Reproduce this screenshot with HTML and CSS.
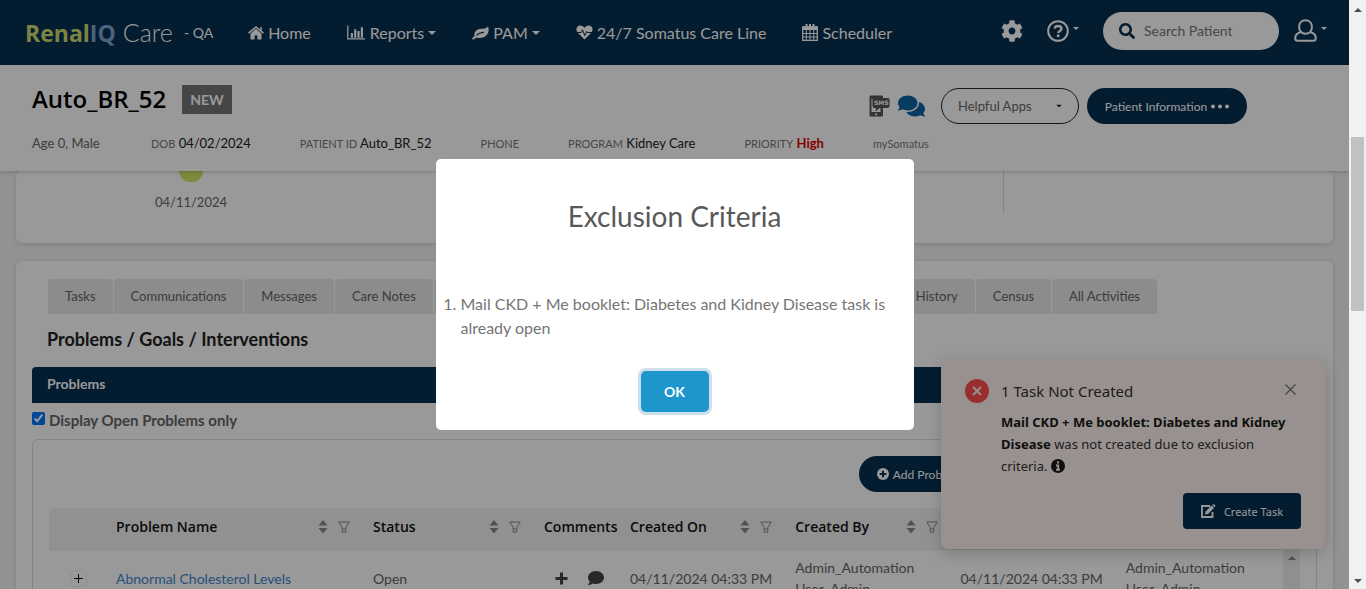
FILE: index.html
```html
<!DOCTYPE html>
<html lang="en">
<head>
<meta charset="utf-8">
<title>RenalIQ Care</title>
<link rel="stylesheet" href="styles.css">
</head>
<body>
<svg class="sprite" aria-hidden="true">
  <symbol id="sorter" viewBox="0 0 10 14"><path d="M5 0l4.500 5.500h-9zM5 13.500L.5 8h9z" fill="currentColor"/></symbol>
  <symbol id="funnel" viewBox="0 0 12 12"><path d="M.8 1h10.400L7.800 6.500v4.700H4.200V6.500zM4.200 8h3.600" fill="none" stroke="currentColor"/></symbol>
  <symbol id="caret" viewBox="0 0 8 4"><path d="M0 0h8L4 4z" fill="currentColor"/></symbol>
</svg>
<div class="app">
  <header class="navbar">
    <div class="brand"><span class="brand-renal">Renal</span><span class="brand-iq">IQ</span><span class="brand-care">Care</span></div>
    <span class="env">- QA</span>
    <nav class="menu">
      <a href="#"><svg width="16" height="14" viewBox="0 0 16 14"><path d="M8 2.800L2.500 7.400V13c0 .4.200.6.600.6h3.500V9.500h2.800v4.100h3.500c.4 0 .6-.2.600-.6V7.400z" fill="currentColor"/><path d="M.5 7.200L8 1l7.500 6.200M13 1v4" fill="none" stroke="currentColor" stroke-width="1.500"/></svg>Home</a>
      <a href="#"><svg width="19" height="15" viewBox="0 0 20 15"><path d="M.8 0v14.200H19" fill="none" stroke="currentColor" stroke-width="1.300"/><path d="M4 8h2.300v5H4zM7.500 4h2.300v9H7.500zM11 6h2.300v7H11zM14.500 2h2.300v11h-2.300z" fill="currentColor"/></svg>Reports<svg class="caret" width="8" height="4"><use href="#caret"/></svg></a>
      <a href="#"><svg width="17" height="14" viewBox="0 0 17 14"><path d="M16 .3c1 2.700 1 6.500-1.500 9-2.500 2.700-6.500 3.200-9.700 2.100C3.300 11.600 2.800 13.600 1 13.500c-1.200-.2-1-1.300-.2-2 .8-.8 1.700-1 1.700-2C2 6 4.300 3.300 8 2.900c3-.3 6.300.2 8-2.600z" fill="currentColor"/><path d="M4.500 9.500C6 7.800 8.500 6.500 12 6.300" fill="none" stroke="#072f50" stroke-width="1.100"/></svg>PAM<svg class="caret" width="8" height="4"><use href="#caret"/></svg></a>
      <a href="#"><svg width="17" height="15" viewBox="0 0 17 15"><path d="M8.500 14.500L2 8C-.6 5.300 0 .5 4.300.5c2 0 3.200 1.200 4.200 2.400 1-1.200 2.200-2.400 4.200-2.400C17 .5 17.600 5.300 15 8z" fill="currentColor"/><path d="M1 7.500h4.300l1.200-2.700 2.300 5.800 1.900-4.300.7 1.200H16" fill="none" stroke="#072f50"/></svg>24/7 Somatus Care Line</a>
      <a href="#"><svg width="16" height="17" viewBox="0 0 16 17"><path d="M.7 3h14.600v13.300H.7z" fill="none" stroke="currentColor" stroke-width="1.300"/><path d="M.7 2.500h14.600V6H.7z" fill="currentColor"/><path d="M4.300 6v10M8 6v10M11.700 6v10M1 9.500h14M1 13h14" stroke="currentColor"/><path d="M4.500 0v4.500M11.500 0v4.500M8 0v3" stroke="currentColor" stroke-width="2"/></svg>Scheduler</a>
    </nav>
    <div class="tools">
      <button class="plain" aria-label="Settings"><svg width="22" height="22" viewBox="0 0 512 512"><path fill="currentColor" d="M487.400 315.700l-42.600-24.600c4.300-23.200 4.300-47 0-70.200l42.600-24.600c4.900-2.800 7.100-8.600 5.500-14-11.100-35.600-30-67.800-54.700-94.600-3.800-4.100-10-5.100-14.800-2.300L380.800 110c-17.900-15.400-38.500-27.300-60.800-35.100V25.800c0-5.600-3.900-10.500-9.400-11.700-36.700-8.200-74.300-7.800-109.200 0-5.500 1.200-9.400 6.100-9.400 11.700V75c-22.200 7.900-42.800 19.800-60.800 35.100L88.700 85.500c-4.900-2.800-11-1.900-14.800 2.300-24.700 26.700-43.600 58.900-54.700 94.600-1.700 5.400.6 11.200 5.500 14L67.300 221c-4.300 23.200-4.300 47 0 70.200l-42.600 24.600c-4.900 2.800-7.100 8.600-5.500 14 11.100 35.600 30 67.800 54.700 94.600 3.800 4.100 10 5.100 14.800 2.300l42.600-24.600c17.900 15.400 38.500 27.300 60.800 35.100v49.200c0 5.600 3.900 10.500 9.400 11.700 36.700 8.200 74.300 7.800 109.200 0 5.500-1.200 9.400-6.100 9.400-11.700v-49.200c22.200-7.900 42.800-19.800 60.800-35.100l42.600 24.600c4.900 2.800 11 1.900 14.800-2.300 24.700-26.700 43.600-58.900 54.700-94.600 1.500-5.500-.7-11.300-5.600-14.100zM256 336c-44.100 0-80-35.900-80-80s35.900-80 80-80 80 35.900 80 80-35.900 80-80 80z"/></svg></button>
      <button class="plain" aria-label="Help"><svg width="22" height="22" viewBox="0 0 22 22" fill="none" stroke="currentColor"><circle cx="11" cy="11" r="9.800" stroke-width="2"/><path d="M7.500 8.500C8 6.700 9.300 6 11 6c2 0 3.500 1 3.500 2.800 0 2.200-3.200 2.200-3.200 4.200" stroke-width="2.400"/><path d="M11.200 14.500v2.600" stroke-width="2.600"/></svg><svg class="tiny-caret" width="6" height="3" viewBox="0 0 8 4"><use href="#caret"/></svg></button>
      <label class="search"><svg width="16" height="16" viewBox="0 0 512 512"><path fill="currentColor" d="M505 442.700L405.300 343c-4.500-4.500-10.600-7-17-7H372c27.600-35.300 44-79.700 44-128C416 93.100 322.900 0 208 0S0 93.100 0 208s93.100 208 208 208c48.300 0 92.700-16.400 128-44v16.300c0 6.400 2.500 12.500 7 17l99.700 99.700c9.400 9.400 24.600 9.400 33.900 0l28.300-28.300c9.400-9.400 9.400-24.600.1-34zM208 336c-70.700 0-128-57.200-128-128 0-70.700 57.200-128 128-128 70.700 0 128 57.200 128 128 0 70.700-57.200 128-128 128z"/></svg><input type="text" placeholder="Search Patient" aria-label="Search Patient"></label>
      <button class="plain" aria-label="Account"><svg width="23" height="23" viewBox="0 0 23 23" fill="none" stroke="currentColor" stroke-width="2"><path d="M11.500 1.200c4 0 6.400 3 6.400 6.800s-2.400 6.700-6.400 6.700S5.100 11.800 5.100 8s2.400-6.800 6.400-6.800z"/><path d="M6.500 13.200C3 14 1.200 16.500 1.200 19.300c0 1.700 1 2.500 2.500 2.500h15.600c1.500 0 2.500-.8 2.500-2.500 0-2.800-1.800-5.300-5.300-6.100"/></svg><svg class="tiny-caret" width="6" height="3" viewBox="0 0 8 4"><use href="#caret"/></svg></button>
    </div>
  </header>

  <section class="patient">
    <div class="patient-top">
      <h1>Auto_BR_52</h1><span class="badge">NEW</span>
      <div class="patient-actions">
        <button class="plain sms" aria-label="Send SMS"><svg width="21" height="22" viewBox="0 0 21 22"><path d="M2 .5h10.500c1 0 1.500.6 1.500 1.500v18c0 1-.5 1.500-1.500 1.500H2c-1 0-1.500-.5-1.500-1.500V2C.5 1 1 .5 2 .5z" fill="currentColor"/><path d="M2.500 4h9v13h-9z" fill="#fff"/><path d="M5.500 3h13c1.200 0 2 .7 2 1.700v6.600c0 1-.8 1.700-2 1.700h-8L6.700 16.500V13H5.500c-1.200 0-2-.7-2-1.700V4.700c0-1 .8-1.700 2-1.700z" fill="currentColor"/><circle cx="7.200" cy="19.300" r="1.100" fill="#fff"/><text x="5" y="10">SMS</text></svg></button>
        <button class="plain chat" aria-label="Chat"><svg width="27" height="24" viewBox="0 0 576 512"><path fill="currentColor" d="M416 192c0-88.400-93.100-160-208-160S0 103.600 0 192c0 34.300 14.100 65.900 38 92-13.400 30.200-35.500 54.200-35.800 54.500-2.200 2.300-2.800 5.700-1.500 8.700S4.800 352 8 352c36.600 0 66.900-12.300 88.700-25 32.200 15.700 70.300 25 111.300 25 114.900 0 208-71.600 208-160zm122 220c23.900-26 38-57.700 38-92 0-66.900-53.500-124.200-129.300-148.100.9 6.600 1.300 13.300 1.300 20.100 0 105.900-107.700 192-240 192-10.800 0-21.300-.8-31.700-1.900C207.800 439.600 281.800 480 368 480c41 0 79.100-9.200 111.300-25 21.800 12.700 52.100 25 88.700 25 3.200 0 6.100-1.900 7.300-4.800 1.300-2.900.7-6.300-1.500-8.700-.3-.3-22.400-24.200-35.800-54.500z"/></svg></button>
        <span class="select-wrap"><select aria-label="Helpful Apps"><option>Helpful Apps</option></select><svg width="6" height="4" viewBox="0 0 8 4"><use href="#caret"/></svg></span>
        <button class="pill info">Patient Information<svg width="18" height="5" viewBox="0 0 18 5" fill="currentColor"><circle cx="2" cy="2.500" r="2"/><circle cx="9" cy="2.500" r="2"/><circle cx="16" cy="2.500" r="2"/></svg></button>
      </div>
    </div>
    <div class="facts">
      <span class="age">Age 0, Male</span>
      <span><small>DOB</small> <b>04/02/2024</b></span>
      <span><small>PATIENT ID</small> <b>Auto_BR_52</b></span>
      <span><small>PHONE</small></span>
      <span><small>PROGRAM</small> <b>Kidney Care</b></span>
      <span><small>PRIORITY</small> <strong>High</strong></span>
      <span><small>mySomatus</small></span>
    </div>
  </section>

  <main>
    <section class="card timeline">
      <div class="milestone"><i></i><span>04/11/2024</span></div>
      <div class="aside"></div>
    </section>
    <section class="card work">
      <div class="tabs">
        <button>Tasks</button><button>Communications</button><button>Messages</button><button>Care Notes</button><button class="wide">History</button><button>Census</button><button>All Activities</button>
      </div>
      <h2>Problems / Goals / Interventions</h2>
      <h3>Problems</h3>
      <div class="only-open"><input type="checkbox" id="open-only" checked><label for="open-only">Display Open Problems only</label></div>
      <div class="panel">
        <div class="toolbar"><button class="pill add"><svg width="12" height="12" viewBox="0 0 12 12"><circle cx="6" cy="6" r="6" fill="currentColor"/><path d="M6 2.700v6.600M2.700 6h6.600" stroke="#072f50" stroke-width="2"/></svg>Add Problem</button></div>
        <div class="grid">
          <table>
            <colgroup><col class="c-expand"><col class="c-name"><col class="c-status"><col class="c-comments"><col><col><col><col></colgroup>
            <thead><tr>
              <th></th>
              <th><div class="head">Problem Name<span><svg width="10" height="14"><use href="#sorter"/></svg><svg width="12" height="12"><use href="#funnel"/></svg></span></div></th>
              <th><div class="head">Status<span><svg width="10" height="14"><use href="#sorter"/></svg><svg width="12" height="12"><use href="#funnel"/></svg></span></div></th>
              <th><div class="head">Comments</div></th>
              <th><div class="head">Created On<span><svg width="10" height="14"><use href="#sorter"/></svg><svg width="12" height="12"><use href="#funnel"/></svg></span></div></th>
              <th><div class="head">Created By<span><svg width="10" height="14"><use href="#sorter"/></svg><svg width="12" height="12"><use href="#funnel"/></svg></span></div></th>
              <th></th><th></th>
            </tr></thead>
            <tbody><tr>
              <td><button class="expand" aria-label="Expand row"><svg width="9" height="9" viewBox="0 0 9 9"><path d="M4.500 0v9M0 4.500h9" stroke="currentColor"/></svg></button></td>
              <td><a href="#">Abnormal Cholesterol Levels</a></td>
              <td>Open</td>
              <td><div class="notes"><svg width="13" height="13" viewBox="0 0 13 13"><path d="M6.500.5v12M.5 6.500h12" stroke="currentColor" stroke-width="3"/></svg><svg width="16" height="16" viewBox="0 0 512 512"><path fill="currentColor" d="M256 32C114.600 32 0 125.100 0 240c0 49.600 21.400 95 57 130.700C44.500 421.100 2.700 466 2.200 466.500c-2.200 2.300-2.800 5.700-1.500 8.700S4.800 480 8 480c66.300 0 116-31.800 140.600-51.400 32.700 12.300 69 19.400 107.400 19.400 141.400 0 256-93.100 256-208S397.400 32 256 32z"/></svg></div></td>
              <td>04/11/2024 04:33 PM</td>
              <td>Admin_Automation User_Admin</td>
              <td>04/11/2024 04:33 PM</td>
              <td>Admin_Automation User_Admin</td>
            </tr></tbody>
          </table>
          <div class="grid-scroll"><svg width="8" height="4" viewBox="0 0 8 4"><path d="M0 4h8L4 0z" fill="currentColor"/></svg></div>
        </div>
      </div>
    </section>
  </main>

  <aside class="toast" role="alert">
    <svg class="toast-icon" width="24" height="24" viewBox="0 0 24 24"><circle cx="12" cy="12" r="12" fill="#ff4d4f"/><path d="M8 8l8 8M16 8l-8 8" stroke="#fff2f0" stroke-width="1.800"/></svg>
    <div class="toast-body">
      <div class="toast-title">1 Task Not Created</div>
      <p><b>Mail CKD + Me booklet: Diabetes and Kidney Disease</b> was not created due to exclusion criteria. <svg width="14" height="14" viewBox="0 0 14 14"><circle cx="7" cy="7" r="7" fill="#1a1a1a"/><path d="M7 2.300v2.200M5 6.500h2.200V11M5 10.800h4" fill="none" stroke="#fff2f0" stroke-width="1.900"/></svg></p>
    </div>
    <button class="plain toast-close" aria-label="Close"><svg width="11" height="11" viewBox="0 0 11 11"><path d="M.5.5l10 10M10.500.5l-10 10" stroke="currentColor" stroke-width="1.300"/></svg></button>
    <button class="create"><svg width="15" height="14" viewBox="0 0 15 14"><path d="M9 2H1v11h10.500V8" fill="none" stroke="currentColor" stroke-width="1.800"/><path d="M4.500 7.500l6-6 2.500 2.500-6 6-3 .5zM11.200.9c.8-.9 1.700-1 2.500-.2s.8 1.700-.1 2.500z" fill="currentColor"/></svg>Create Task</button>
  </aside>

  <div class="overlay">
    <div class="modal" role="dialog" aria-labelledby="modal-title">
      <h2 id="modal-title">Exclusion Criteria</h2>
      <ol><li>Mail CKD + Me booklet: Diabetes and Kidney Disease task is already open</li></ol>
      <button>OK</button>
    </div>
  </div>
</div>
<div class="scrollbar" aria-hidden="true">
  <svg width="8" height="4" viewBox="0 0 8 4"><path d="M0 4h8L4 0z" fill="currentColor"/></svg>
  <div class="track"><i></i></div>
  <svg width="8" height="4" viewBox="0 0 8 4"><path d="M0 0h8L4 4z" fill="currentColor"/></svg>
</div>
</body>
</html>
```
FILE: styles.css
```css
* { box-sizing: border-box; }
body { margin: 0; height: 100vh; display: flex; overflow: hidden; font-family: Lato, "Open Sans", sans-serif; font-size: 14px; color: #666; }
h1, h2, h3, p, ol { margin: 0; }
button, input, select { font: inherit; color: inherit; }
button { border: 0; cursor: pointer; }
svg { flex: none; }
.sprite { position: absolute; width: 0; height: 0; }
.plain { padding: 0; background: none; display: flex; align-items: center; }
.app { position: relative; flex: 1; min-width: 0; overflow: hidden; background: #f3f3f3; }

.navbar { height: 65px; padding: 0 22px 0 25px; display: flex; align-items: center; background: #072f50; color: #fff; }
.brand { display: flex; align-items: baseline; line-height: 32px; font-size: 23px; }
.brand-renal, .brand-iq { font-family: "Open Sans", sans-serif; font-weight: 700; }
.brand-renal { color: #cfdc72; }
.brand-iq { color: #7ba5d3; }
.brand-care { margin-left: 7px; font-size: 25px; font-weight: 300; }
.env { margin-left: 11px; }
.menu { margin-left: 35px; display: flex; gap: 36px; }
.menu a { display: flex; align-items: center; gap: 4px; color: #fff; font-size: 16px; text-decoration: none; white-space: nowrap; }
.tools { margin-left: auto; display: flex; align-items: center; height: 61px; align-self: flex-start; }
.tools > :nth-child(1) { margin-right: 24px; }
.tools > :nth-child(2) { margin-right: 24px; }
.tools > :nth-child(3) { margin-right: 15px; }
.tiny-caret { margin: 0 0 5px 4px; }
.search { width: 176px; height: 38px; padding: 0 16px; display: flex; align-items: center; gap: 9px; border-radius: 19px; background: #fff; color: #072f50; }
.search input { width: 110px; padding: 0; border: 0; outline: 0; background: none; font-size: 14px; }
.search input::placeholder { color: #777; }

.patient { position: relative; z-index: 1; height: 106px; padding: 16px 32px 0; background: #fff; box-shadow: 0 1px 4px rgba(0, 0, 0, .2); }
.patient-top { display: flex; align-items: center; height: 36px; }
.patient h1 { font-family: "Open Sans", sans-serif; font-size: 24px; font-weight: 600; line-height: 32px; color: #000; }
.badge { margin-left: 16px; padding: 0 8px; line-height: 29px; background: #767676; color: #fff; font-weight: 700; }
.patient-actions { margin: 14px 70px 0 auto; display: flex; align-items: center; gap: 8px; }
.sms { color: #555; }
.sms text { font: bold 6px "DejaVu Sans", sans-serif; fill: #fff; }
.chat { color: #0c63a4; }
.select-wrap { margin-left: 8px; position: relative; display: flex; align-items: center; color: #222; }
.select-wrap select { appearance: none; width: 138px; height: 36px; padding: 0 16px; border: 1px solid #222; border-radius: 18px; background: #fff; font-size: 13px; color: #666; }
.select-wrap svg { position: absolute; right: 17px; }
.pill { height: 36px; border-radius: 18px; background: #072f50; color: #fff; font-size: 12px; display: flex; align-items: center; justify-content: center; gap: 4px; }
.info { width: 160px; padding: 0; }
.facts { margin-top: 16px; display: flex; gap: 49px; line-height: 20px; font-size: 13px; white-space: nowrap; }
.facts small { font-size: 11px; color: #777; }
.facts b { font-weight: 400; color: #222; }
.facts strong { color: #e00000; }
.age { min-width: 70px; }

main { padding: 0 16px; }
.card { background: #fff; border-radius: 6px; box-shadow: 0 1px 5px rgba(0, 0, 0, .13); }
.timeline { height: 72px; display: flex; justify-content: space-between; }
.milestone { width: 350px; display: flex; flex-direction: column; align-items: center; font-size: 13px; line-height: 20px; }
.milestone i { width: 24px; height: 11px; margin-bottom: 10px; border-radius: 0 0 12px 12px; background: #d3e468; }
.aside { width: 330px; height: 43px; border-left: 1px solid #ddd; }
.work { margin-top: 18px; padding: 18px 16px 0; min-height: 400px; }
.tabs { margin-left: 16px; display: flex; gap: 1px; width: 1109px; }
.tabs button { height: 35px; padding: 0 17px 2px; border-radius: 4px 4px 0 0; background: #e9e9e9; font-size: 13px; white-space: nowrap; }
.tabs .wide { flex: 1; text-align: right; }
.work h2 { margin: 13px 0 0 15px; font-size: 18px; line-height: 24px; font-weight: 700; color: #222; }
.work h3 { margin-top: 16px; height: 36px; padding: 0 15px; line-height: 34px; font-size: 14px; color: #fff; background: #072f50; border-radius: 4px 4px 0 0; }
.only-open { display: flex; align-items: center; gap: 4px; height: 36px; padding-bottom: 3px; font-size: 15px; font-weight: 700; }
.only-open input { width: 13px; height: 13px; margin: 0 0 2px; }
.panel { padding: 16px 16px 0; border: 1px solid #ddd; border-radius: 6px 6px 0 0; }
.toolbar { display: flex; justify-content: flex-end; padding-right: 321px; margin-bottom: 16px; }
.add { width: 120px; padding: 0; }
.grid { display: flex; }
table { flex: 1; width: 100%; min-width: 0; table-layout: fixed; border-collapse: collapse; }
.c-expand { width: 59px; }
.c-name { width: 257px; }
.c-status { width: 171px; }
.c-comments { width: 86px; }
th { height: 41px; padding: 0 8px; background: #f2f2f2; border-bottom: 1px solid #e6e6e6; text-align: left; }
th:first-child { border-radius: 6px 0 0 0; }
.head { display: flex; align-items: center; justify-content: space-between; margin-bottom: 3px; font-family: "Open Sans", sans-serif; font-size: 14px; font-weight: 600; color: #111; white-space: nowrap; }
.head span { display: flex; align-items: center; gap: 10px; margin-right: 7px; color: #888; }
td { height: 58px; padding: 0 8px; line-height: 21px; color: #666; }
td a { color: #3f87d0; text-decoration: none; }
.expand { width: 17px; height: 17px; margin: 0 auto; padding: 0; display: flex; align-items: center; justify-content: center; border: 1px solid #eee; border-radius: 6px; background: #fff; color: #111; }
.notes { display: flex; align-items: center; gap: 20px; padding-left: 11px; color: #444; }
.grid-scroll { flex: none; width: 17px; margin-top: 41px; padding-top: 7px; display: flex; justify-content: center; background: #eee; color: #888; }

.toast { position: absolute; z-index: 2; right: 24px; bottom: 40px; width: 384px; padding: 20px 24px; display: flex; flex-wrap: wrap; align-items: flex-start; border-radius: 8px; background: #fff2f0; box-shadow: 0 4px 16px rgba(0, 0, 0, .2); font-family: "Noto Sans", "Open Sans", sans-serif; color: #333; }
.toast-icon { margin: 0 12px 0 0; }
.toast-body { width: 300px; }
.toast-title { line-height: 24px; margin-bottom: 8px; font-size: 15px; }
.toast p { font-size: 13px; line-height: 22px; }
.toast p b { color: #1a1a1a; }
.toast p svg { vertical-align: -2px; }
.toast-close { position: absolute; top: 25px; right: 29px; color: #777; }
.create { margin: 16px 0 0 auto; width: 118px; height: 36px; padding: 0; display: flex; align-items: center; justify-content: center; gap: 8px; border-radius: 4px; background: #072f50; color: #fff; font-size: 11px; }

.overlay { position: absolute; z-index: 3; inset: 0; display: flex; align-items: center; justify-content: center; background: rgba(0, 0, 0, .4); }
.modal { width: 478px; padding: 39px 8px 18px; display: flex; flex-direction: column; align-items: center; border-radius: 5px; background: #fff; }
.modal h2 { font-size: 28px; line-height: 36px; font-weight: 400; color: #595959; }
.modal ol { width: 100%; margin: 58px 0 31px; padding-left: 17px; font-size: 16px; line-height: 24px; color: #757575; }
.modal button { width: 68px; height: 41px; padding: 0; border-radius: 5px; background: #1e96cc; color: #fff; font-size: 14px; font-weight: 700; box-shadow: 0 0 0 3px #cddfec; }

.scrollbar { width: 17px; padding: 8px 0 6px; display: flex; flex-direction: column; align-items: center; background: #f1f1f1; color: #505050; }
.track { flex: 1; width: 13px; padding-top: 125px; }
.track i { display: block; height: 174px; background: #c1c1c1; }
```
